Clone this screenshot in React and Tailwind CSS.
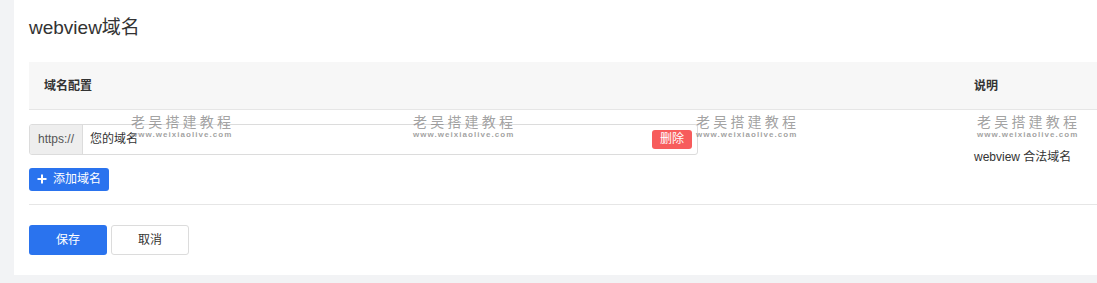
import React from 'react'

const font = { fontFamily: '"Liberation Sans", "Noto Sans CJK SC", sans-serif' }

function Watermark({ left }) {
  return (
    <div className="absolute top-[115px] pointer-events-none select-none leading-none" style={{ left }}>
      <div className="text-[14px] tracking-[3.2px] text-[#8a8a8a]/80">老吴搭建教程</div>
      <div className="mt-[2px] text-[8px] font-bold tracking-[1.05px] text-[#8a8a8a]/80">www.weixiaolive.com</div>
    </div>
  )
}

export default function App() {
  return (
    <div className="min-h-[283px] bg-[#f2f3f5] pl-[14px] pb-[8px] text-[#333]" style={font}>
      <div className="relative bg-white pl-[15px]">
        <h2 className="pt-[16px] pb-[23px] text-[19px] leading-[23px] text-[#333]">webview域名</h2>

        <div className="grid grid-cols-[930px_1fr] bg-[#f7f7f7] border-b border-[#e6e6e6] h-[48px] items-center text-[12px] font-bold text-[#333]">
          <div className="pl-[15px]">域名配置</div>
          <div className="pl-[15px]">说明</div>
        </div>

        <div className="grid grid-cols-[930px_1fr] border-b border-[#e6e6e6] h-[95px] items-center">
          <div className="flex flex-col gap-[13px]">
            <div className="flex w-[669px] h-[31px] border border-[#dcdcdc] rounded-[3px] overflow-hidden">
              <div className="w-[53px] bg-[#eeeeee] border-r border-[#dcdcdc] flex items-center justify-center text-[12px] text-[#555]">https://</div>
              <div className="flex-1 flex items-center justify-between pl-[7px] pr-[5px]">
                <span className="text-[12px] text-[#333]">您的域名</span>
                <button className="h-[19px] w-[40px] rounded-[3px] bg-[#f75c5c] text-white text-[12px] leading-[19px]">删除</button>
              </div>
            </div>
            <button className="w-[80px] h-[23px] rounded-[3px] bg-[#2a73ee] text-white text-[12px] flex items-center justify-center gap-[6px]">
              <svg width="10" height="10" viewBox="0 0 10 10"><path d="M5 0.5v9M0.5 5h9" stroke="white" strokeWidth="2" /></svg>
              添加域名
            </button>
          </div>
          <div className="pl-[15px] text-[12px] text-[#333]">webview 合法域名</div>
        </div>

        <div className="flex gap-[4px] py-[20px]">
          <button className="w-[78px] h-[30px] rounded-[3px] bg-[#2a73ee] text-white text-[12px]">保存</button>
          <button className="w-[78px] h-[30px] rounded-[3px] bg-white border border-[#dcdcdc] text-[#333] text-[12px]">取消</button>
        </div>

        <Watermark left={117} />
        <Watermark left={399} />
        <Watermark left={682} />
        <Watermark left={963} />
      </div>
    </div>
  )
}
